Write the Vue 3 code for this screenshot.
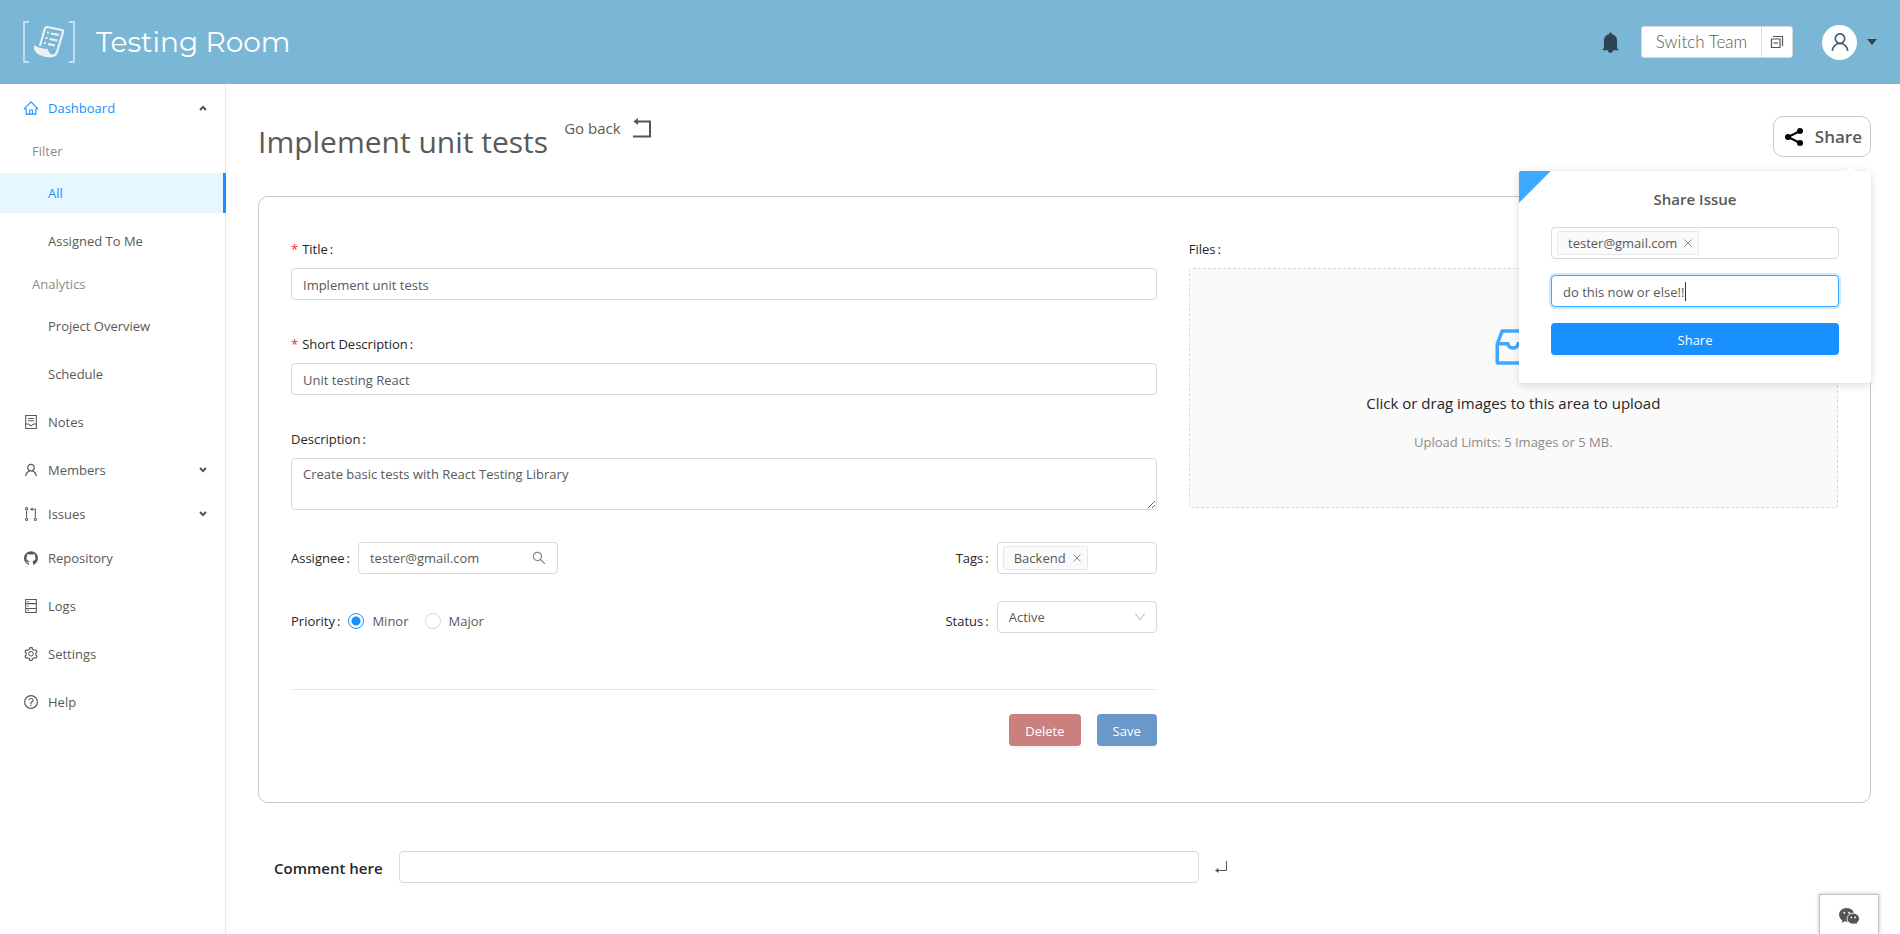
<script setup>
import { ref, computed, onMounted } from 'vue'

const paths = {
  home: 'M946.5 505L560.1 118.8l-25.9-25.9a31.5 31.5 0 00-44.4 0L77.5 505a63.9 63.9 0 00-18.8 46c.4 35.2 29.7 63.3 64.9 63.3h42.5V940h691.8V614.3h43.4c17.1 0 33.2-6.7 45.3-18.8a63.6 63.6 0 0018.7-45.3c0-17-6.7-33.1-18.8-45.2zM568 868H456V664h112v204zm217.9-325.7V868H632V640c0-22.1-17.9-40-40-40H432c-22.1 0-40 17.9-40 40v228H238.1V542.3h-96l370-369.7 23.1 23.1L882 542.3h-96.1z',
  user: 'M858.5 763.6a374 374 0 00-80.6-119.5 375.63 375.63 0 00-119.5-80.6c-.4-.2-.8-.3-1.2-.5C719.5 518 760 444.7 760 362c0-137-111-248-248-248S264 225 264 362c0 82.7 40.5 156 102.8 201.1-.4.2-.8.3-1.2.5-44.8 18.9-85 46-119.5 80.6a375.63 375.63 0 00-80.6 119.5A371.7 371.7 0 00136 901.8a8 8 0 008 8.2h60c4.4 0 7.9-3.5 8-7.8 2-77.2 33-149.5 87.8-204.3 56.7-56.7 132-87.9 212.2-87.9s155.5 31.2 212.2 87.9C779 752.7 810 825 812 902.2c.1 4.4 3.6 7.8 8 7.8h60a8 8 0 008-8.2c-1-47.8-10.9-94.3-29.5-138.2zM512 534c-45.9 0-89.1-17.9-121.6-50.4S340 407.9 340 362c0-45.9 17.9-89.1 50.4-121.6S466.1 190 512 190s89.1 17.9 121.6 50.4S684 316.1 684 362c0 45.9-17.9 89.1-50.4 121.6S557.9 534 512 534z',
  note: 'M136 64h752v896H136zM206 134v756h612V134zM322 250h380v62H322zM322 400h380v62H322zM206 610h150l156 110 156-110h150v62H688L512 796 336 672H206z',
  issues: 'M232 64a104 104 0 110 208 104 104 0 010-208zm0 62a42 42 0 100 84 42 42 0 000-84zM200 260h64v500h-64zM232 750a104 104 0 110 208 104 104 0 010-208zm0 62a42 42 0 100 84 42 42 0 000-84zM790 750a104 104 0 110 208 104 104 0 010-208zm0 62a42 42 0 100 84 42 42 0 000-84zM758 760V236H610v90L450 204 610 84v88h212v588z',
  github: 'M511.6 76.3C264.3 76.2 64 276.4 64 523.5 64 718.9 189.3 885 363.8 946c23.5 5.9 19.9-10.8 19.9-22.2v-77.5c-135.7 15.9-141.2-73.9-150.3-88.9C215 726 171.5 718 184.5 703c30.9-15.9 62.4 4 98.9 57.9 26.4 39.1 77.9 32.5 104 26 5.7-23.5 17.9-44.5 34.7-60.8-140.6-25.2-199.2-111-199.2-213 0-49.5 16.3-95 48.3-131.7-20.4-60.5 1.9-112.3 4.9-120 58.1-5.2 118.5 41.6 123.2 45.3 33-8.9 70.7-13.6 112.9-13.6 42.4 0 80.2 4.9 113.5 13.9 11.3-8.6 67.3-48.8 121.3-43.9 2.9 7.7 24.7 58.3 5.5 118 32.4 36.8 48.9 82.7 48.9 132.3 0 102.2-59 188.1-200 212.9a127.5 127.5 0 0138.1 91v112.5c.8 9 0 17.9 15 17.9 177.1-59.7 304.6-227 304.6-424.1 0-247.2-200.4-447.3-447.5-447.3z',
  logs: 'M136 64h752v896H136zM206 134v188h612V134zM206 392v240h612V392zM206 702v188h612V702zM290 190h80v80h-80zM290 472h80v80h-80zM290 756h80v80h-80z',
  settings: 'M924.8 625.7l-65.5-56c3.1-19 4.7-38.4 4.7-57.8s-1.6-38.8-4.7-57.8l65.5-56a32.03 32.03 0 009.3-35.2l-.9-2.6a443.74 443.74 0 00-79.7-137.9l-1.8-2.1a32.12 32.12 0 00-35.1-9.5l-81.3 28.9c-30-24.6-63.5-44-99.7-57.6l-15.7-85a32.05 32.05 0 00-25.8-25.7l-2.7-.5c-52.1-9.4-106.9-9.4-159 0l-2.7.5a32.05 32.05 0 00-25.8 25.7l-15.8 85.4a351.86 351.86 0 00-99 57.4l-81.9-29.1a32 32 0 00-35.1 9.5l-1.8 2.1a446.02 446.02 0 00-79.7 137.9l-.9 2.6c-4.5 12.5-.8 26.5 9.3 35.2l66.3 56.6c-3.1 18.8-4.6 38-4.6 57.1 0 19.2 1.5 38.4 4.6 57.1L99 625.5a32.03 32.03 0 00-9.3 35.2l.9 2.6c18.1 50.4 44.9 96.9 79.7 137.9l1.8 2.1a32.12 32.12 0 0035.1 9.5l81.9-29.1c29.8 24.5 63.1 43.9 99 57.4l15.8 85.4a32.05 32.05 0 0025.8 25.7l2.7.5a449.4 449.4 0 00159 0l2.7-.5a32.05 32.05 0 0025.8-25.7l15.7-85a350 350 0 0099.7-57.6l81.3 28.9a32 32 0 0035.1-9.5l1.8-2.1c34.8-41.1 61.6-87.5 79.7-137.9l.9-2.6c4.5-12.3.8-26.3-9.3-35zM788.3 465.9c2.5 15.1 3.8 30.6 3.8 46.1s-1.3 31-3.8 46.1l-6.6 40.1 74.7 63.9a370.03 370.03 0 01-42.6 73.6L721 702.8l-31.4 25.8c-23.9 19.6-50.5 35-79.3 45.8l-38.1 14.3-17.9 97a377.5 377.5 0 01-85 0l-17.9-97.2-37.8-14.5c-28.5-10.8-55-26.2-78.7-45.7l-31.4-25.9-93.4 33.2c-17-22.9-31.2-47.6-42.6-73.6l75.5-64.5-6.5-40c-2.4-14.9-3.7-30.3-3.7-45.5 0-15.3 1.2-30.6 3.7-45.5l6.5-40-75.5-64.5c11.3-26.1 25.6-50.7 42.6-73.6l93.4 33.2 31.4-25.9c23.7-19.5 50.2-34.9 78.7-45.7l37.9-14.3 17.9-97.2c28.1-3.2 56.8-3.2 85 0l17.9 97 38.1 14.3c28.7 10.8 55.4 26.2 79.3 45.8l31.4 25.8 92.8-32.9c17 22.9 31.2 47.6 42.6 73.6L781.8 426l6.5 39.9zM512 326c-97.2 0-176 78.8-176 176s78.8 176 176 176 176-78.8 176-176-78.8-176-176-176zm79.2 255.2A111.6 111.6 0 01512 614c-29.9 0-58-11.7-79.2-32.8A111.6 111.6 0 01400 502c0-29.9 11.7-58 32.8-79.2C454 401.6 482.1 390 512 390c29.9 0 58 11.6 79.2 32.8A111.6 111.6 0 01624 502c0 29.9-11.7 58-32.8 79.2z',
  help: 'M512 64a448 448 0 110 896 448 448 0 010-896zm0 76a372 372 0 100 744 372 372 0 000-744zM472 692h80v80h-80zM476 632v-60c0-60 38-88 76-106 34-16 58-38 58-70 0-44-42-74-98-74s-98 32-98 80h-68c0-86 72-146 166-146s166 56 166 140c0 66-44 104-94 128-28 14-40 24-40 50v58z',
}

const dashboardGroups = [
  { title: 'Filter', items: ['All', 'Assigned To Me'] },
  { title: 'Analytics', items: ['Project Overview', 'Schedule'] },
]
const menu = [
  { label: 'Notes', icon: 'note' },
  { label: 'Members', icon: 'user', sub: true },
  { label: 'Issues', icon: 'issues', sub: true },
  { label: 'Repository', icon: 'github' },
  { label: 'Logs', icon: 'logs' },
  { label: 'Settings', icon: 'settings' },
  { label: 'Help', icon: 'help' },
]

const title = ref('Implement unit tests')
const shortDescription = ref('Unit testing React')
const description = ref('Create basic tests with React Testing Library')
const assignee = ref('tester@gmail.com')
const priority = ref('minor')
const status = ref('Active')
const message = ref('do this now or else!!')
const comment = ref('')
const messageInput = ref(null)
const mounted = ref(false)

// The text cursor is a custom element that follows the width of the typed message.
const cursorLeft = computed(() => {
  if (!mounted.value) return 12
  const context = document.createElement('canvas').getContext('2d')
  const style = getComputedStyle(messageInput.value)
  context.font = `${style.fontSize} ${style.fontFamily}`
  return 12 + Math.ceil(context.measureText(message.value).width)
})

onMounted(() => {
  mounted.value = true
  messageInput.value.focus()
})
</script>

<template>
  <div class="page">
    <header class="topbar">
      <svg class="logo" viewBox="0 0 52 42" aria-hidden="true">
        <path d="M6 1H1v40h5M46 1h5v40h-5" fill="none" stroke="#dcebf3" stroke-width="1.4" />
        <g fill="none" stroke="#eef1f3">
          <path d="M17 25L22 7q1-1 2-1l15 3q1.500 .5 1 2L34 31q-1.500 4-6 4" stroke-width="2.2" />
          <path d="M24 11.500h2M28 12.500l8 1.500M22.500 17h2M26.500 18l8 1.500M21 22h2M25 23l7 1.500" stroke-width="2" />
        </g>
        <path d="M11 24q6 4 14 4 0 4 5 6l-2 2.500Q14 36 11 28z" fill="#eef1f3" />
      </svg>
      <span class="brand">Testing Room</span>
      <div class="tools">
        <button class="plain" type="button" aria-label="Notifications">
          <svg class="bell" viewBox="64 64 896 896"><path fill="#2b4352" d="M816 768h-24V428c0-141.100-104.300-257.800-240-277.200V112c0-22.100-17.900-40-40-40s-40 17.900-40 40v38.800C336.300 170.200 232 286.900 232 428v340h-24c-17.700 0-32 14.300-32 32v32c0 4.400 3.600 8 8 8h216c0 61.800 50.200 112 112 112s112-50.200 112-112h216c4.400 0 8-3.600 8-8v-32c0-17.700-14.300-32-32-32z" /></svg>
        </button>
        <div class="team">
          <button class="team-name" type="button">Switch Team</button>
          <button class="team-icon" type="button" aria-label="Teams">
            <svg viewBox="0 0 14 14" fill="none" stroke="#555"><path d="M3 1.500h9.500V11" stroke-width="1.200" /><path d="M1.500 4h8.500v8.500h-8.500z" stroke-width="1.200" /><path d="M3.500 8h4.500" stroke-width="1.200" /></svg>
          </button>
        </div>
        <button class="account" type="button" aria-label="Account">
          <span class="avatar"><svg viewBox="64 64 896 896"><path fill="#4a6272" :d="paths.user" /></svg></span>
          <svg class="caret" viewBox="0 0 10 6"><path d="M0 0h10L5 6z" fill="#3c4246" /></svg>
        </button>
      </div>
    </header>

    <div class="body">
      <nav class="sidebar">
        <button class="item active" type="button">
          <svg class="ico" viewBox="64 64 896 896"><path fill="currentColor" :d="paths.home" /></svg>
          <span>Dashboard</span>
          <svg class="arrow" viewBox="0 0 8 6"><path d="M1 5l3-3 3 3" /></svg>
        </button>
        <div v-for="group in dashboardGroups" :key="group.title" class="group">
          <div class="group-title">{{ group.title }}</div>
          <a v-for="name in group.items" :key="name" href="#" class="child" :class="{ selected: name === 'All' }">{{ name }}</a>
        </div>
        <template v-for="entry in menu" :key="entry.label">
          <button v-if="entry.sub" class="item" type="button">
            <svg class="ico" viewBox="64 64 896 896"><path fill="currentColor" fill-rule="evenodd" :d="paths[entry.icon]" /></svg>
            <span>{{ entry.label }}</span>
            <svg class="arrow" viewBox="0 0 8 6"><path d="M1 1l3 3 3-3" /></svg>
          </button>
          <a v-else class="item single" href="#">
            <svg class="ico" viewBox="64 64 896 896"><path fill="currentColor" fill-rule="evenodd" :d="paths[entry.icon]" /></svg>
            <span>{{ entry.label }}</span>
          </a>
        </template>
      </nav>

      <main class="main">
        <div class="heading">
          <h1>{{ title }}</h1>
          <a class="back" href="#">
            <span>Go back</span>
            <svg viewBox="0 0 20 20"><path d="M4 3.500h14v15H1" fill="none" stroke="#555" stroke-width="2" /><path d="M1.500 3.500L6 0v7z" fill="#555" /></svg>
          </a>
          <div class="share-anchor">
            <button class="share" type="button">
              <svg viewBox="0 0 18 18"><path d="M15 3L3 9l12 6" fill="none" stroke="#000" stroke-width="2" /><circle cx="15" cy="3" r="3" /><circle cx="3" cy="9" r="3" /><circle cx="15" cy="15" r="3" /></svg>
              <span>Share</span>
            </button>
            <form class="popover" aria-label="Share Issue" @submit.prevent>
              <h2>Share Issue</h2>
              <div class="control tagbox">
                <span class="tag">tester@gmail.com
                  <button class="remove" type="button" aria-label="Remove tester@gmail.com"><svg viewBox="0 0 8 8"><path d="M.5 .5l7 7M7.500 .5l-7 7" /></svg></button>
                </span>
                <input class="bare" type="text" aria-label="Recipients" />
              </div>
              <div class="message">
                <input ref="messageInput" v-model="message" class="control focused" type="text" aria-label="Message" />
                <span class="cursor" :style="{ left: cursorLeft + 'px' }"></span>
              </div>
              <button class="btn primary" type="submit">Share</button>
            </form>
          </div>
        </div>

        <form class="card" @submit.prevent>
          <div class="fields">
            <div class="field">
              <label class="top-label required" for="f-title">Title<i>:</i></label>
              <input id="f-title" v-model="title" class="control" type="text" />
            </div>
            <div class="field">
              <label class="top-label required" for="f-short">Short Description<i>:</i></label>
              <input id="f-short" v-model="shortDescription" class="control" type="text" />
            </div>
            <div class="field">
              <label class="top-label" for="f-desc">Description<i>:</i></label>
              <textarea id="f-desc" v-model="description" class="control area"></textarea>
            </div>
            <div class="line">
              <div class="inline">
                <label for="f-assignee">Assignee<i>:</i></label>
                <div class="control search">
                  <input id="f-assignee" v-model="assignee" class="bare" type="text" />
                  <svg viewBox="64 64 896 896"><path fill="#8c8c8c" d="M909.600 854.500L649.900 594.800C690.200 542.700 712 479 712 412c0-80.200-31.300-155.400-87.900-212.100-56.600-56.700-132-87.900-212.100-87.900s-155.500 31.300-212.100 87.900C143.200 256.500 112 331.800 112 412c0 80.100 31.300 155.500 87.900 212.100C256.500 680.800 331.800 712 412 712c67 0 130.600-21.800 182.700-62l259.700 259.600a8.200 8.200 0 0011.600 0l43.600-43.500a8.200 8.200 0 000-11.600zM570.400 570.400C528 612.700 471.800 636 412 636s-116-23.300-158.400-65.600C211.300 528 188 471.800 188 412s23.300-116.100 65.600-158.400C296 211.300 352.200 188 412 188s116.100 23.200 158.400 65.600S636 352.200 636 412s-23.300 116.100-65.600 158.400z" /></svg>
                </div>
              </div>
              <div class="inline">
                <label for="f-tags">Tags<i>:</i></label>
                <div class="control tagbox narrow">
                  <span class="tag">Backend
                    <button class="remove" type="button" aria-label="Remove Backend"><svg viewBox="0 0 8 8"><path d="M.5 .5l7 7M7.500 .5l-7 7" /></svg></button>
                  </span>
                  <input id="f-tags" class="bare" type="text" />
                </div>
              </div>
            </div>
            <div class="line second">
              <div class="inline" role="radiogroup" aria-labelledby="f-priority">
                <span id="f-priority" class="caption">Priority<i>:</i></span>
                <label class="radio"><input v-model="priority" type="radio" name="priority" value="minor" />Minor</label>
                <label class="radio"><input v-model="priority" type="radio" name="priority" value="major" />Major</label>
              </div>
              <div class="inline status">
                <label for="f-status">Status<i>:</i></label>
                <div class="select">
                  <select id="f-status" v-model="status" class="control"><option>Active</option></select>
                  <svg viewBox="64 64 896 896"><path fill="#bfbfbf" d="M884 256h-75c-5.100 0-9.900 2.500-12.900 6.600L512 654.200 227.900 262.600c-3-4.100-7.800-6.600-12.900-6.600h-75c-6.500 0-10.300 7.400-6.500 12.700l352.600 486.100c12.800 17.600 39 17.600 51.700 0l352.600-486.100c3.900-5.300.1-12.700-6.400-12.700z" /></svg>
                </div>
              </div>
            </div>
            <div class="actions">
              <button class="btn delete" type="button">Delete</button>
              <button class="btn save" type="submit">Save</button>
            </div>
          </div>

          <div class="files">
            <label class="top-label" for="f-files">Files<i>:</i></label>
            <button id="f-files" class="drop" type="button">
              <svg viewBox="0 0 1024 1024"><path fill="#40a9ff" d="M885.200 446.300l-.2-.8-112.200-285.100c-5-16.100-19.900-27.200-36.800-27.200H281.200c-17 0-32.100 11.300-36.900 27.600L139.400 443l-.3.7-.2.8c-1.300 4.900-1.700 9.900-1 14.800-.1 1.600-.2 3.200-.2 4.800V830a60.900 60.900 0 0060.800 60.800h627.200c33.500 0 60.800-27.300 60.900-60.800V464.100c0-1.300 0-2.600-.1-3.700.4-4.900 0-9.600-1.300-14.100zm-295.800-43l-.3 15.700c-.8 44.900-31.800 75.100-77.100 75.100-22.100 0-41.100-7.100-54.800-20.600S436 441.200 435.600 419l-.3-15.700H229.500L309 210h399.200l81.700 193.300H589.400zm-375 76.800h157.300c24.300 57.100 76 90.800 140.400 90.800 33.700 0 65-9.400 90.300-27.200 22.200-15.600 39.500-37.400 50.700-63.600h156.500V814H214.400V480.100z" /></svg>
              <span class="drop-title">Click or drag images to this area to upload</span>
              <span class="drop-hint">Upload Limits: 5 Images or 5 MB.</span>
            </button>
          </div>
        </form>

        <form class="comment" @submit.prevent>
          <label for="f-comment">Comment here</label>
          <input id="f-comment" v-model="comment" class="control" type="text" />
          <button class="plain" type="submit" aria-label="Send comment">
            <svg viewBox="0 0 12 12"><path d="M11.500 0v9.500H2" fill="none" stroke="#555" stroke-width="1" /><path d="M0 9.500L3.500 7v5z" fill="#555" /></svg>
          </button>
        </form>
      </main>
    </div>

    <button class="chat" type="button" aria-label="Chat">
      <svg viewBox="0 0 22 18">
        <path d="M8 0c4.400 0 8 3 8 7s-3.600 7.500-8 7.500q-1.500 0-2.500-.4L3 16l.3-3C1.300 12 0 9.700 0 7c0-4 3.600-7 8-7z" fill="#555" />
        <path d="M15 5.500c3.600 0 6.500 2.600 6.500 5.800 0 2-1 3.700-2.700 4.700l.3 2-2.100-1.200q-1 .3-2 .3c-3.600 0-6.500-2.600-6.500-5.800s2.900-5.800 6.500-5.800z" fill="#555" stroke="#fff" stroke-width="1" />
        <g fill="#fff"><circle cx="5.500" cy="5" r="1" /><circle cx="10.500" cy="5" r="1" /><circle cx="13" cy="10" r=".9" /><circle cx="17" cy="10" r=".9" /></g>
      </svg>
    </button>
  </div>
</template>

<style>
body {
  margin: 0;
  background: #fff;
}
</style>

<style scoped>
* {
  box-sizing: border-box;
}
.page {
  min-height: 100vh;
  display: flex;
  flex-direction: column;
  font-family: "Segoe UI", "Open Sans", "Noto Sans", sans-serif;
  font-size: 13px;
  line-height: 22px;
  color: #595959;
}
button,
input,
select,
textarea {
  font: inherit;
  color: inherit;
  margin: 0;
}
button {
  cursor: pointer;
}
a {
  color: inherit;
  text-decoration: none;
}
svg {
  display: block;
  flex: none;
}
.plain {
  border: 0;
  padding: 0;
  background: none;
}

.topbar {
  height: 84px;
  display: flex;
  align-items: center;
  padding: 0 23px;
  background: #7ab6d5;
}
.logo {
  width: 52px;
  height: 42px;
}
.brand {
  margin-left: 21px;
  font-family: "Montserrat", "Inter", sans-serif;
  font-size: 28px;
  line-height: 36px;
  color: #fff;
}
.tools {
  margin-left: auto;
  display: flex;
  align-items: center;
}
.bell {
  width: 21px;
  height: 21px;
}
.team {
  display: flex;
  height: 32px;
  margin-left: 20px;
  border: 1px solid #d9d9d9;
  border-radius: 3px;
  background: #fff;
}
.team button {
  border: 0;
  background: none;
  padding: 0;
}
.team .team-name {
  width: 119px;
  font-family: "Lato", sans-serif;
  font-size: 17px;
  font-weight: 300;
}
.team .team-icon {
  width: 31px;
  display: grid;
  place-items: center;
  border-left: 1px solid #d9d9d9;
}
.team-icon svg {
  width: 14px;
  height: 14px;
}
.account {
  display: flex;
  align-items: center;
  gap: 10px;
  margin-left: 29px;
  padding: 0;
  border: 0;
  background: none;
}
.avatar {
  width: 35px;
  height: 35px;
  display: grid;
  place-items: center;
  border-radius: 50%;
  background: #fff;
}
.avatar svg {
  width: 20px;
  height: 20px;
}
.caret {
  width: 10px;
  height: 6px;
}

.body {
  flex: 1;
  display: flex;
}
.sidebar {
  flex: none;
  width: 226px;
  padding-top: 4px;
  border-right: 1px solid #e8e8e8;
}
.item {
  width: 100%;
  height: 40px;
  margin: 0 0 4px;
  padding: 0 18px 0 24px;
  display: flex;
  align-items: center;
  gap: 10px;
  border: 0;
  background: none;
  text-align: left;
}
.item.single {
  margin-bottom: 8px;
}
.item.active {
  color: #1890ff;
}
.ico {
  width: 14px;
  height: 14px;
}
.arrow {
  width: 8px;
  height: 6px;
  margin-left: auto;
  fill: none;
  stroke: #555;
  stroke-width: 2;
}
.group-title {
  height: 37px;
  padding: 8px 32px 0;
  line-height: 23px;
  color: #8c8c8c;
}
.child {
  display: block;
  height: 40px;
  margin: 8px -1px 4px 0;
  padding-left: 48px;
  line-height: 40px;
}
.group-title + .child {
  margin-top: 4px;
}
.group {
  display: flow-root;
}
.group + .item {
  margin-top: 4px;
}
.child.selected {
  color: #1890ff;
  background: #e6f7ff;
  border-right: 3px solid #1890ff;
}

.main {
  flex: 1;
  min-width: 0;
  padding: 32px 29px 32px 32px;
}
.heading {
  display: flex;
  align-items: flex-start;
  height: 80px;
}
h1 {
  margin: 0;
  padding-top: 4px;
  font-size: 30px;
  font-weight: 400;
  line-height: 44px;
}
.back {
  display: flex;
  align-items: center;
  gap: 11px;
  margin-left: 16px;
  padding-top: 1px;
  font-size: 15px;
}
.back svg {
  width: 20px;
  height: 20px;
}
.share-anchor {
  position: relative;
  margin-left: auto;
}
.share {
  display: flex;
  align-items: center;
  gap: 12px;
  height: 41px;
  padding: 1px 8px 0 11px;
  border: 1px solid #c8c8c8;
  border-radius: 10px;
  background: #fff;
  font-size: 17px;
  font-weight: 600;
}
.share svg {
  width: 18px;
  height: 18px;
}
.popover {
  position: absolute;
  z-index: 2;
  top: 55px;
  right: 0;
  width: 352px;
  display: flex;
  flex-direction: column;
  gap: 16px;
  padding: 16px 32px 28px;
  border-radius: 2px;
  background: linear-gradient(135deg, #40a9ff 22px, transparent 23px) #fff;
  box-shadow: 0 2px 8px rgba(0, 0, 0, 0.15);
}
.popover::before {
  content: "";
  position: absolute;
  top: -4px;
  right: 16px;
  width: 8px;
  height: 8px;
  background: #fff;
  box-shadow: -1px -1px 3px rgba(0, 0, 0, 0.06);
  transform: rotate(45deg);
}
.popover h2 {
  margin: 0;
  font-size: 15px;
  font-weight: 600;
  line-height: 24px;
  text-align: center;
}

.control {
  display: block;
  width: 100%;
  height: 32px;
  padding: 1px 11px 0;
  border: 1px solid #d9d9d9;
  border-radius: 4px;
  background: #fff;
  outline: 0;
}
.message {
  position: relative;
}
.focused {
  border-color: #40a9ff;
  box-shadow: 0 0 0 2px rgba(24, 144, 255, 0.2);
  caret-color: transparent;
}
.cursor {
  position: absolute;
  top: 7px;
  width: 1px;
  height: 19px;
  background: #333;
}
.area {
  height: 52px;
  padding-top: 4px;
  resize: vertical;
}
.tagbox {
  display: flex;
  align-items: center;
  padding: 0 5px;
}
.tag {
  display: flex;
  align-items: center;
  gap: 7px;
  height: 24px;
  padding: 0 6px 0 10px;
  border: 1px solid #e8e8e8;
  border-radius: 2px;
  background: #fafafa;
}
.remove {
  padding: 0;
  border: 0;
  background: none;
}
.remove svg {
  width: 8px;
  height: 8px;
  stroke: #8c8c8c;
}
.bare {
  flex: 1;
  min-width: 0;
  padding: 0;
  border: 0;
  outline: 0;
  background: none;
}
.btn {
  height: 32px;
  padding: 1px 15px 0;
  border: 1px solid transparent;
  border-radius: 4px;
  color: #fff;
  box-shadow: 0 2px 0 rgba(0, 0, 0, 0.04);
}
.primary {
  background: #1890ff;
}
.delete {
  background: #cb8080;
}
.save {
  background: #6899ca;
}

.card {
  display: grid;
  grid-template-columns: 4fr 3fr;
  gap: 32px;
  padding: 32px 32px 56px;
  border: 1px solid #c8c8c8;
  border-radius: 10px;
}
.card label,
.caption {
  color: #262626;
}
.card i {
  margin: 0 8px 0 2px;
  font-style: normal;
}
.top-label {
  display: block;
  height: 39px;
  padding-top: 9px;
}
.required::before {
  content: "*";
  margin-right: 4px;
  color: #f5222d;
}
.field {
  margin-bottom: 24px;
}
.line {
  display: flex;
  justify-content: space-between;
  margin-top: 32px;
}
.line.second {
  margin-top: 27px;
  align-items: flex-start;
}
.inline {
  display: flex;
  align-items: center;
}
.second .inline {
  height: 40px;
}
.second .status {
  align-items: flex-start;
}
.status label {
  padding-top: 9px;
}
.search {
  width: 200px;
  display: flex;
  align-items: center;
  padding-top: 0;
}
.search svg {
  width: 14px;
  height: 14px;
}
.narrow,
.select {
  width: 160px;
}
.select {
  position: relative;
}
.select select {
  appearance: none;
  padding-top: 0;
}
.select svg {
  position: absolute;
  top: 10px;
  right: 11px;
  width: 12px;
  height: 12px;
  pointer-events: none;
}
.card .radio {
  display: flex;
  align-items: center;
  gap: 8px;
  margin-right: 16px;
  color: #595959;
}
.radio input {
  appearance: none;
  width: 16px;
  height: 16px;
  border: 1px solid #d9d9d9;
  border-radius: 50%;
  background: #fff;
}
.radio input:checked {
  border-color: #1890ff;
  background: radial-gradient(circle, #1890ff 4px, #fff 5px);
}
.actions {
  display: flex;
  justify-content: flex-end;
  gap: 16px;
  margin-top: 48px;
  padding-top: 24px;
  border-top: 1px solid #e8e8e8;
}
.drop {
  width: 100%;
  height: 240px;
  display: flex;
  flex-direction: column;
  align-items: center;
  padding: 54px 16px 16px;
  border: 1px dashed #d9d9d9;
  border-radius: 4px;
  background: #fafafa;
}
.drop svg {
  width: 48px;
  height: 48px;
}
.drop-title {
  margin-top: 21px;
  font-size: 15px;
  color: #262626;
}
.drop-hint {
  margin-top: 17px;
  color: #8c8c8c;
}

.comment {
  display: flex;
  align-items: center;
  gap: 16px;
  margin-top: 48px;
  padding-left: 16px;
}
.comment label {
  flex: none;
  padding-top: 2px;
  font-size: 15px;
  font-weight: 600;
  color: #262626;
}
.comment .control {
  width: 800px;
}
.comment svg {
  width: 12px;
  height: 12px;
}

.chat {
  position: fixed;
  right: 21px;
  bottom: 0;
  width: 60px;
  height: 40px;
  display: grid;
  place-items: center;
  padding: 4px 0 0;
  border: 1px solid #c0c0c0;
  border-bottom: 0;
  background: #fff;
  box-shadow: 0 0 4px rgba(0, 0, 0, 0.25);
}
.chat svg {
  width: 21px;
  height: 17px;
}
</style>
